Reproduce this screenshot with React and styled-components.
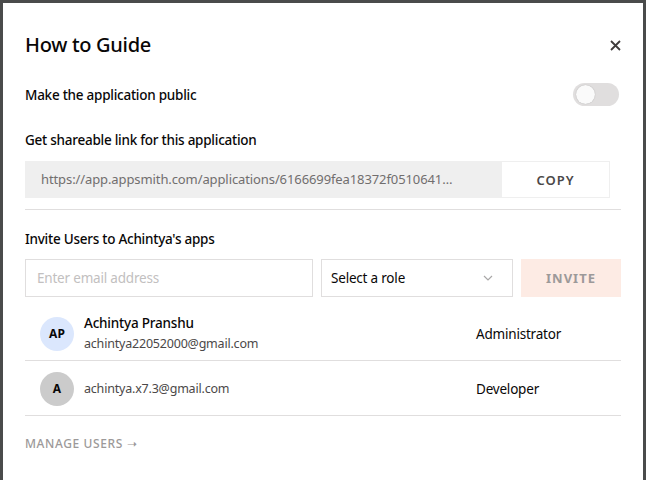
import React from "react";
import styled, { createGlobalStyle } from "styled-components";

const Global = createGlobalStyle`
  html, body { margin: 0; padding: 0; }
  body {
    background: #4a4b4b;
    font-family: "Noto Sans", "Open Sans", sans-serif;
    color: #090707;
  }
  * { box-sizing: border-box; }
`;

const Overlay = styled.div`
  width: 646px;
  height: 480px;
  padding: 3px 3px 0 3px;
  overflow: hidden;
  background: #4a4b4b;
`;

const Modal = styled.div`
  width: 640px;
  height: 477px;
  background: #fff;
  padding: 28px 22px 0 22px;
  display: flex;
  flex-direction: column;
`;

const Header = styled.div`
  display: flex;
  align-items: center;
  justify-content: space-between;
  height: 28px;
`;

const Title = styled.h1`
  margin: 0;
  font-size: 20px;
  font-weight: 500;
  line-height: 28px;
  letter-spacing: -0.3px;
`;

const CloseButton = styled.button`
  border: none;
  background: none;
  padding: 0;
  width: 12px;
  height: 12px;
  display: flex;
  align-items: center;
  justify-content: center;
  cursor: pointer;
`;

const Row = styled.div`
  display: flex;
  align-items: center;
  justify-content: space-between;
  margin-top: ${(p) => p.$mt || 0}px;
`;

const Label = styled.div`
  font-size: 13.5px;
  line-height: 20px;
  font-weight: 500;
  letter-spacing: -0.25px;
  margin-top: ${(p) => p.$mt || 0}px;
`;

const Toggle = styled.div`
  width: 46px;
  height: 23px;
  border-radius: 12px;
  background: #e0dede;
  position: relative;
  margin-right: 2px;
`;

const Knob = styled.span`
  position: absolute;
  left: 3px;
  top: 2px;
  width: 19px;
  height: 19px;
  border-radius: 50%;
  background: #fafafa;
  box-shadow: 0 0 1px rgba(0,0,0,0.3);
`;

const LinkBox = styled.div`
  width: 585px;
  height: 37px;
  margin-top: 11px;
  background: #efefef;
  padding: 1px;
  display: flex;
  align-items: stretch;
`;

const LinkText = styled.div`
  flex: 1;
  min-width: 0;
  padding: 0 20px 0 15px;
  font-size: 13px;
  line-height: 35px;
  letter-spacing: -0.1px;
  color: #716e6e;
  white-space: nowrap;
  overflow: hidden;
`;

const CopyButton = styled.button`
  width: 107px;
  flex-shrink: 0;
  border: none;
  background: #fff;
  font-family: inherit;
  font-size: 13px;
  font-weight: 600;
  letter-spacing: 1px;
  color: #4b4848;
  padding: 0;
`;

const Divider = styled.hr`
  border: none;
  border-top: 1px solid #e0dede;
  margin: ${(p) => p.$mt || 0}px 0 0 0;
  width: 596px;
`;

const InviteRow = styled.div`
  display: flex;
  gap: 8px;
  margin-top: 10px;
  height: 38px;
`;

const EmailInput = styled.input`
  width: 288px;
  height: 38px;
  border: 1px solid #e0dede;
  padding: 0 11px;
  font-family: inherit;
  font-size: 13.5px;
  letter-spacing: -0.2px;
  color: #090707;
  outline: none;
  &::placeholder { color: #c2c0c0; }
`;

const Select = styled.div`
  width: 192px;
  height: 38px;
  border: 1px solid #e0dede;
  display: flex;
  align-items: center;
  justify-content: space-between;
  padding: 0 19px 0 9px;
  font-size: 13.5px;
  letter-spacing: -0.2px;
`;

const InviteButton = styled.button`
  flex: 1;
  border: none;
  background: #fdebe4;
  color: #9c9999;
  font-family: inherit;
  font-size: 13px;
  font-weight: 700;
  letter-spacing: 1px;
  padding: 0;
`;

const UserList = styled.div`
  margin-top: 9px;
  width: 596px;
`;

const UserRow = styled.div`
  display: grid;
  grid-template-columns: 34px 1fr 145px;
  column-gap: 10px;
  align-items: center;
  height: 55px;
  padding: 1px 0 0 15px;
  border-bottom: 1px solid #e0dede;
`;

const Avatar = styled.div`
  width: 34px;
  height: 34px;
  border-radius: 50%;
  background: ${(p) => p.$bg};
  display: flex;
  align-items: center;
  justify-content: center;
  font-size: 12px;
  font-weight: 700;
  color: #090707;
`;

const Info = styled.div`
  display: flex;
  flex-direction: column;
  gap: 1px;
`;

const Name = styled.div`
  font-size: 13.5px;
  line-height: 19px;
  font-weight: 500;
  letter-spacing: -0.2px;
`;

const Email = styled.div`
  font-size: 12.5px;
  line-height: 19px;
  letter-spacing: -0.2px;
  color: #4b4848;
`;

const Role = styled.div`
  font-size: 13.5px;
  letter-spacing: -0.2px;
  color: #090707;
`;

const ManageLink = styled.a`
  margin-top: 20px;
  font-size: 12px;
  line-height: 16px;
  font-weight: 500;
  letter-spacing: 0.6px;
  color: #9c9999;
  text-decoration: none;
`;

const users = [
  { initials: "AP", bg: "#dbe7fd", name: "Achintya Pranshu", email: "achintya22052000@gmail.com", role: "Administrator" },
  { initials: "A", bg: "#cbcbcb", name: null, email: "achintya.x7.3@gmail.com", role: "Developer" },
];

export default function App() {
  return (
    <>
      <Global />
      <Overlay>
        <Modal>
          <Header>
            <Title>How to Guide</Title>
            <CloseButton aria-label="close">
              <svg width="11" height="11" viewBox="0 0 11 11">
                <path d="M1 1L10 10M10 1L1 10" stroke="#3f3c3c" strokeWidth="1.8" />
              </svg>
            </CloseButton>
          </Header>
          <Row $mt={24}>
            <Label>Make the application public</Label>
            <Toggle><Knob /></Toggle>
          </Row>
          <Label $mt={24}>Get shareable link for this application</Label>
          <LinkBox>
            <LinkText>https://app.appsmith.com/applications/6166699fea18372f0510641…</LinkText>
            <CopyButton>COPY</CopyButton>
          </LinkBox>
          <Divider $mt={11} />
          <Label $mt={19}>Invite Users to Achintya's apps</Label>
          <InviteRow>
            <EmailInput placeholder="Enter email address" />
            <Select>
              <span>Select a role</span>
              <svg width="10" height="6" viewBox="0 0 10 6">
                <path d="M1 1L5 5L9 1" stroke="#a9a7a7" strokeWidth="1.2" fill="none" />
              </svg>
            </Select>
            <InviteButton>INVITE</InviteButton>
          </InviteRow>
          <UserList>
            {users.map((u) => (
              <UserRow key={u.email}>
                <Avatar $bg={u.bg}>{u.initials}</Avatar>
                <Info>
                  {u.name && <Name>{u.name}</Name>}
                  <Email>{u.email}</Email>
                </Info>
                <Role>{u.role}</Role>
              </UserRow>
            ))}
          </UserList>
          <ManageLink href="#">MANAGE USERS ➝</ManageLink>
        </Modal>
      </Overlay>
    </>
  );
}
